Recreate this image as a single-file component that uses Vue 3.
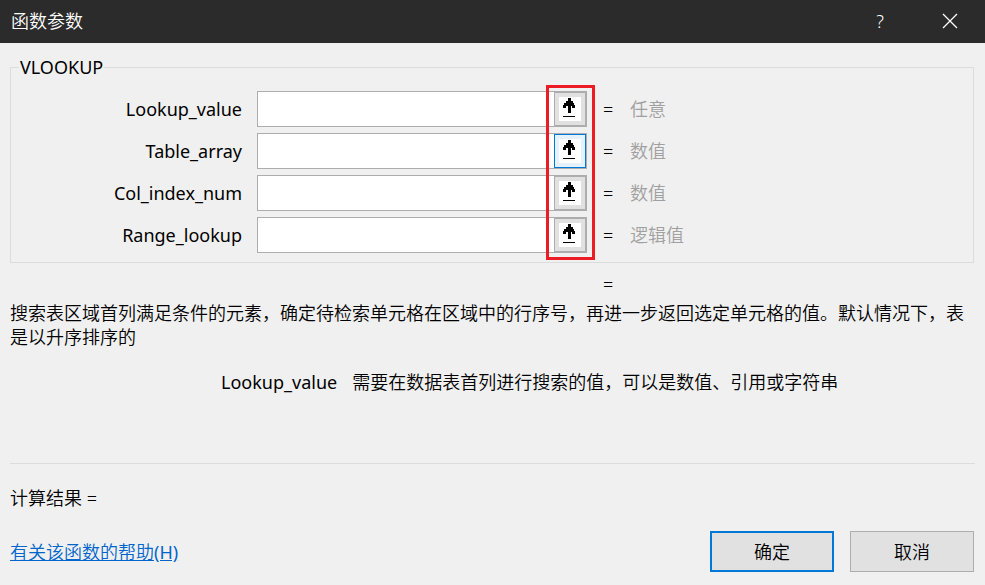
<script setup>
import { ref } from 'vue'

const fields = ref([
  { name: 'Lookup_value', kind: '任意', value: '', active: false },
  { name: 'Table_array', kind: '数值', value: '', active: true },
  { name: 'Col_index_num', kind: '数值', value: '', active: false },
  { name: 'Range_lookup', kind: '逻辑值', value: '', active: false },
])
</script>

<template>
  <div class="dialog">
    <header class="titlebar">
      <h1>函数参数</h1>
      <button class="window-button" type="button" aria-label="帮助">?</button>
      <button class="window-button" type="button" aria-label="关闭">
        <svg width="16" height="16" viewBox="0 0 16 16">
          <path d="M1 1 L15 15 M15 1 L1 15" stroke="#fff" stroke-width="1.3" fill="none" />
        </svg>
      </button>
    </header>

    <main class="content">
      <fieldset class="arguments">
        <legend class="latin">VLOOKUP</legend>
        <div class="rows">
          <div v-for="field in fields" :key="field.name" class="row">
            <label class="latin" :for="field.name">{{ field.name }}</label>
            <div class="reference-box">
              <input :id="field.name" v-model="field.value" type="text" />
              <button
                type="button"
                class="picker"
                :class="{ active: field.active }"
                :aria-label="field.name"
              >
                <svg width="22" height="24" viewBox="0 0 22 24" shape-rendering="crispEdges">
                  <rect width="22" height="24" fill="#fff" />
                  <path d="M9 1h3v3h2v2h1v2h1v3h-3v-2h-1v7h-3v-7h-2v2h-3v-3h1v-2h2v-2h2z" />
                  <rect x="4" y="19" width="12" height="1" />
                </svg>
              </button>
            </div>
            <span class="equals">=</span>
            <span class="kind">{{ field.kind }}</span>
          </div>
          <div class="highlight"></div>
        </div>
      </fieldset>

      <div class="row total"><span class="equals">=</span></div>

      <p class="description">
        搜索表区域首列满足条件的元素，确定待检索单元格在区域中的行序号，再进一步返回选定单元格的值。默认情况下，表是以升序排序的
      </p>
      <div class="argument-help">
        <span class="latin">Lookup_value</span>
        <span>需要在数据表首列进行搜索的值，可以是数值、引用或字符串</span>
      </div>

      <hr />
      <p class="result">计算结果 =</p>

      <footer>
        <a href="#help">有关该函数的帮助<span class="latin">(H)</span></a>
        <button class="action primary" type="button">确定</button>
        <button class="action" type="button">取消</button>
      </footer>
    </main>
  </div>
</template>

<style>
body {
  margin: 0;
  background: #f0f0f0;
}
</style>

<style scoped>
.dialog {
  color: #000;
  font: 350 18px/24px "Noto Sans", "Noto Sans CJK SC", sans-serif;
}
.latin {
  font-weight: 400;
}
button,
input {
  box-sizing: border-box;
  margin: 0;
  padding: 0;
  border-radius: 0;
  font: inherit;
  color: inherit;
}
.titlebar {
  display: flex;
  align-items: center;
  box-sizing: border-box;
  height: 43px;
  padding: 0 0 2px 11px;
  background: #2b2b2b;
  color: #fff;
}
h1 {
  flex: 1;
  margin: 0;
  font-size: 18px;
  font-weight: inherit;
}
.window-button {
  display: flex;
  align-items: center;
  justify-content: center;
  width: 70px;
  height: 40px;
  border: 0;
  background: none;
}
.content {
  padding: 12px 11px 0 10px;
}
.arguments {
  min-width: 0;
  margin: 0;
  padding: 12px 0 9px;
  border: 1px solid #dcdcdc;
}
legend {
  margin-left: 8px;
  padding: 0 1px;
}
.rows {
  position: relative;
  display: grid;
  gap: 6px;
}
.row {
  display: grid;
  grid-template-columns: 246px 330px 43px 1fr;
  align-items: center;
}
.row label {
  padding-right: 15px;
  text-align: right;
}
.reference-box {
  display: flex;
  box-sizing: border-box;
  height: 36px;
  border: 1px solid #adadb0;
  background: #fff;
}
.reference-box input {
  flex: 1;
  min-width: 0;
  padding: 0 6px;
  border: 0;
  outline: none;
  background: none;
}
.picker {
  display: flex;
  align-items: center;
  justify-content: center;
  width: 32px;
  border: 1px solid #adadb0;
  background: #e1e1e1;
}
.picker.active {
  border-color: #0078d7;
  background: #e5f1fb;
}
.equals {
  grid-column: 3;
  padding-left: 16px;
}
.kind {
  color: #a0a0a0;
}
.highlight {
  position: absolute;
  top: -6px;
  bottom: -7px;
  left: 535px;
  box-sizing: border-box;
  width: 49px;
  border: 3px solid #ed1c24;
  pointer-events: none;
}
.total {
  margin: 9px 0 5px;
  padding-left: 1px;
}
.description {
  margin: 0;
}
.argument-help {
  display: flex;
  gap: 15px;
  margin: 21px 0 69px;
  padding-left: 211px;
}
hr {
  height: 1px;
  margin: 0 -1px 0 0;
  border: 0;
  background: #dcdcdc;
}
.result {
  margin: 22px 0 21px;
}
footer {
  display: flex;
  align-items: center;
  gap: 16px;
}
footer a {
  margin-right: auto;
  color: #0066cc;
  text-decoration: underline;
}
.action {
  width: 124px;
  height: 41px;
  border: 1px solid #adadad;
  background: #e1e1e1;
}
.action.primary {
  border: 2px solid #0078d7;
}
</style>
